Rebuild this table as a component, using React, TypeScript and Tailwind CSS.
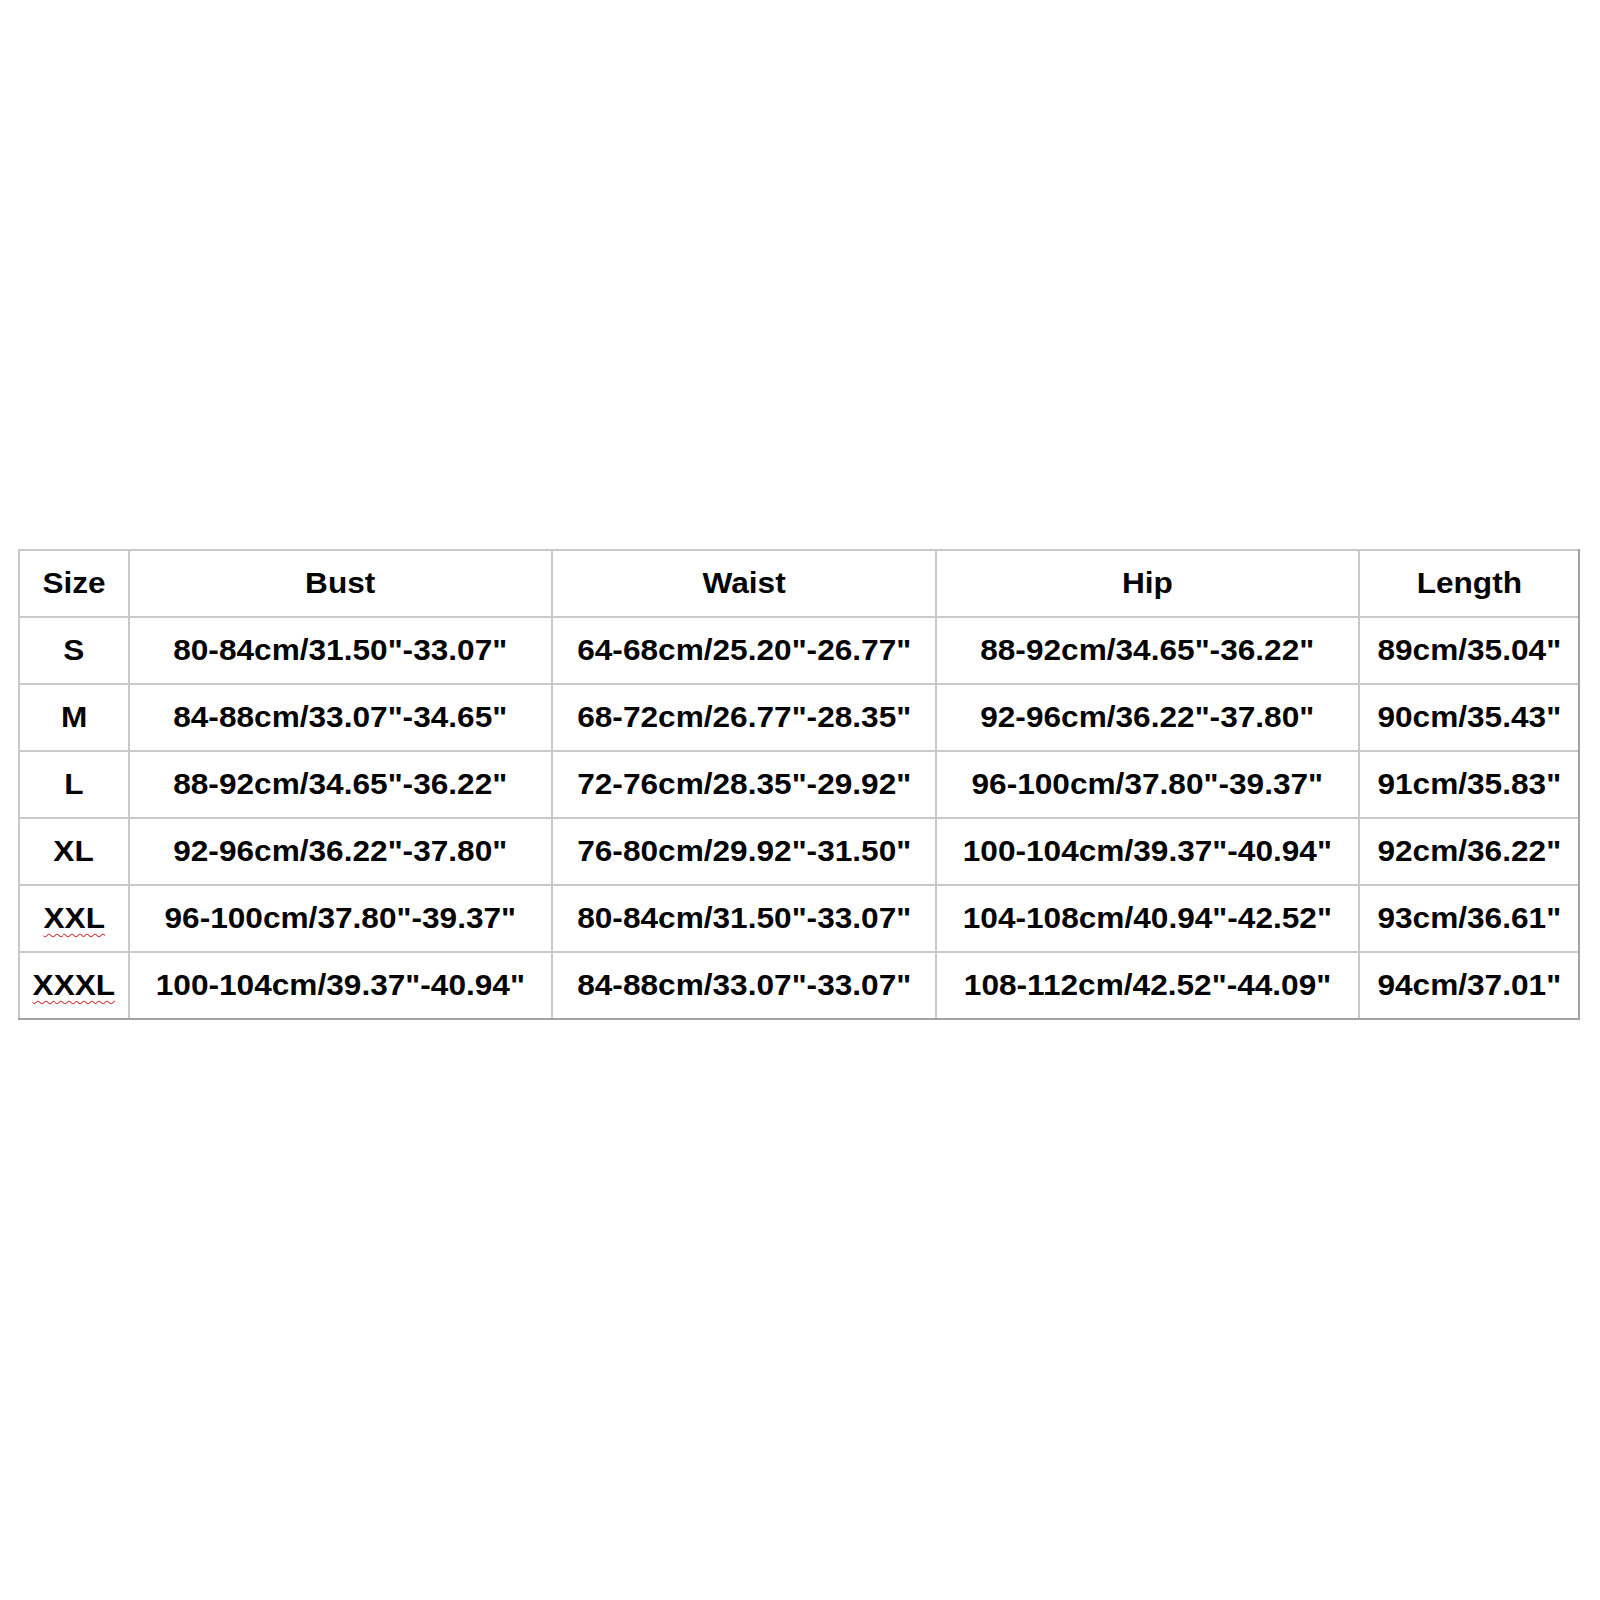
import React from "react";

const header = ["Size", "Bust", "Waist", "Hip", "Length"];
const rows: string[][] = [
  ["S", '80-84cm/31.50"-33.07"', '64-68cm/25.20"-26.77"', '88-92cm/34.65"-36.22"', '89cm/35.04"'],
  ["M", '84-88cm/33.07"-34.65"', '68-72cm/26.77"-28.35"', '92-96cm/36.22"-37.80"', '90cm/35.43"'],
  ["L", '88-92cm/34.65"-36.22"', '72-76cm/28.35"-29.92"', '96-100cm/37.80"-39.37"', '91cm/35.83"'],
  ["XL", '92-96cm/36.22"-37.80"', '76-80cm/29.92"-31.50"', '100-104cm/39.37"-40.94"', '92cm/36.22"'],
  ["XXL", '96-100cm/37.80"-39.37"', '80-84cm/31.50"-33.07"', '104-108cm/40.94"-42.52"', '93cm/36.61"'],
  ["XXXL", '100-104cm/39.37"-40.94"', '84-88cm/33.07"-33.07"', '108-112cm/42.52"-44.09"', '94cm/37.01"'],
];

function Cell({ text, wavy }: { text: string; wavy?: boolean }) {
  return (
    <div className="bg-white flex items-center justify-center h-[65px] overflow-visible">
      <span
        className={
          "inline-block scale-x-[1.09] text-[29px] font-bold text-[#050505] whitespace-nowrap leading-none " +
          (wavy ? "underline decoration-wavy decoration-[#cc3a3a] decoration-1 underline-offset-[5px]" : "")
        }
        style={{ fontFamily: '"Liberation Sans", Arial, sans-serif' }}
      >
        {text}
      </span>
    </div>
  );
}

export default function App() {
  return (
    <div className="w-[1600px] h-[1600px] bg-white pt-[549px] pl-[18px]">
      <div className="inline-block border-r-2 border-b-2 border-[#a3a3a3]">
        <div className="grid grid-cols-[108px_421px_382px_421px_218px] gap-[2px] bg-[#c9c9c9] pt-[2px] pl-[2px]">
          {header.map((h) => (
            <Cell key={h} text={h} />
          ))}
          {rows.map((r) =>
            r.map((c, i) => (
              <Cell key={r[0] + i} text={c} wavy={i === 0 && (c === "XXL" || c === "XXXL")} />
            ))
          )}
        </div>
      </div>
    </div>
  );
}
